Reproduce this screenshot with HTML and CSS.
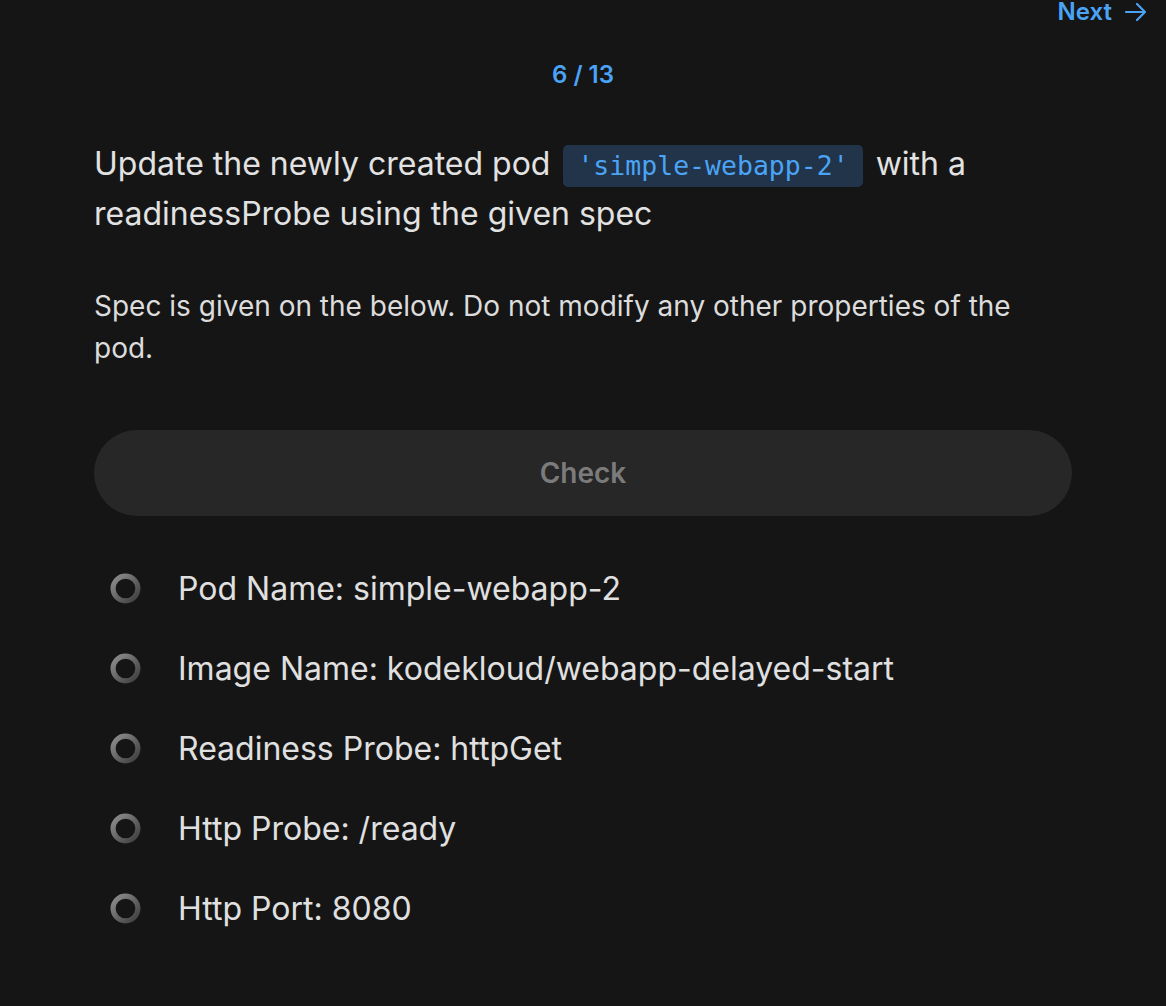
FILE: index.html
```html
<!DOCTYPE html>
<html lang="en">
<head>
<meta charset="utf-8">
<title>Task 6 / 13</title>
<link rel="stylesheet" href="styles.css">
</head>
<body>
<header class="topbar">
  <a class="next" href="#">Next
    <svg class="next-arrow" width="24" height="20" viewBox="0 0 24 20" fill="none" stroke="currentColor" stroke-width="2.2" stroke-linecap="round" stroke-linejoin="round"><path d="M2 10h19M13 2l8 8-8 8"/></svg>
  </a>
</header>
<div class="counter">6 / 13</div>
<main class="content">
  <h1 class="title">Update the newly created pod <code class="code">'simple-webapp-2'</code> with a readinessProbe using the given spec</h1>
  <p class="spec">Spec is given on the below. Do not modify any other properties of the pod.</p>
  <button class="check" type="button">Check</button>
  <ul class="checks">
    <li class="item"><svg class="ring" width="31" height="31" viewBox="0 0 30 30"><defs><linearGradient id="g" x1="0" y1="0" x2="1" y2="1"><stop offset="0" stop-color="#8e8e8e"/><stop offset="1" stop-color="#3e3e3e"/></linearGradient></defs><circle cx="15" cy="15" r="12" fill="none" stroke="url(#g)" stroke-width="5"/></svg><span>Pod Name: simple-webapp-2</span></li>
    <li class="item"><svg class="ring" width="31" height="31" viewBox="0 0 30 30"><circle cx="15" cy="15" r="12" fill="none" stroke="url(#g)" stroke-width="5"/></svg><span>Image Name: kodekloud/webapp-delayed-start</span></li>
    <li class="item"><svg class="ring" width="31" height="31" viewBox="0 0 30 30"><circle cx="15" cy="15" r="12" fill="none" stroke="url(#g)" stroke-width="5"/></svg><span>Readiness Probe: httpGet</span></li>
    <li class="item"><svg class="ring" width="31" height="31" viewBox="0 0 30 30"><circle cx="15" cy="15" r="12" fill="none" stroke="url(#g)" stroke-width="5"/></svg><span>Http Probe: /ready</span></li>
    <li class="item"><svg class="ring" width="31" height="31" viewBox="0 0 30 30"><circle cx="15" cy="15" r="12" fill="none" stroke="url(#g)" stroke-width="5"/></svg><span>Http Port: 8080</span></li>
  </ul>
</main>
</body>
</html>
```
FILE: styles.css
```css
* { box-sizing: border-box; }
html, body { margin: 0; padding: 0; }
body {
  background: #151515;
  color: #e0e0e0;
  font-family: Inter, "Noto Sans", "Liberation Sans", sans-serif;
  height: 1006px;
  overflow: hidden;
}
.topbar {
  display: flex;
  justify-content: flex-end;
  height: 24px;
  padding-right: 18px;
}
.next {
  display: flex;
  align-items: center;
  gap: 12px;
  color: #4aa3f5;
  text-decoration: none;
  font-weight: 600;
  font-size: 24px;
  line-height: 24px;
}
.next-arrow { display: block; }
.counter {
  margin-top: 36px;
  text-align: center;
  color: #4aa3f5;
  font-weight: 600;
  font-size: 24px;
  line-height: 30px;
}
.content {
  width: 978px;
  margin: 49px auto 0;
}
.title {
  margin: 0;
  font-weight: 400;
  font-size: 32px;
  line-height: 50px;
  color: #e2e2e2;
}
.code {
  display: inline-block;
  font-family: "DejaVu Sans Mono", "Liberation Mono", monospace;
  font-size: 26.5px;
  line-height: 32px;
  color: #4ba4f5;
  background: #21344a;
  border-radius: 5px;
  padding: 5px 14px;
  margin: 0 4px 0 4px;
}
.spec {
  margin: 46px 0 0;
  font-size: 28px;
  line-height: 42px;
  color: #dcdcdc;
}
.check {
  display: block;
  width: 100%;
  height: 86px;
  margin-top: 61px;
  border: none;
  border-radius: 43px;
  background: #272727;
  color: #7b7b7b;
  font-family: inherit;
  font-weight: 600;
  font-size: 28px;
}
.checks {
  list-style: none;
  margin: 32px 0 0;
  padding: 0;
}
.item {
  display: flex;
  align-items: center;
  height: 80px;
  padding-left: 16px;
  gap: 37px;
  font-size: 32px;
  color: #e0e0e0;
}
.ring { display: block; flex: none; }
```
